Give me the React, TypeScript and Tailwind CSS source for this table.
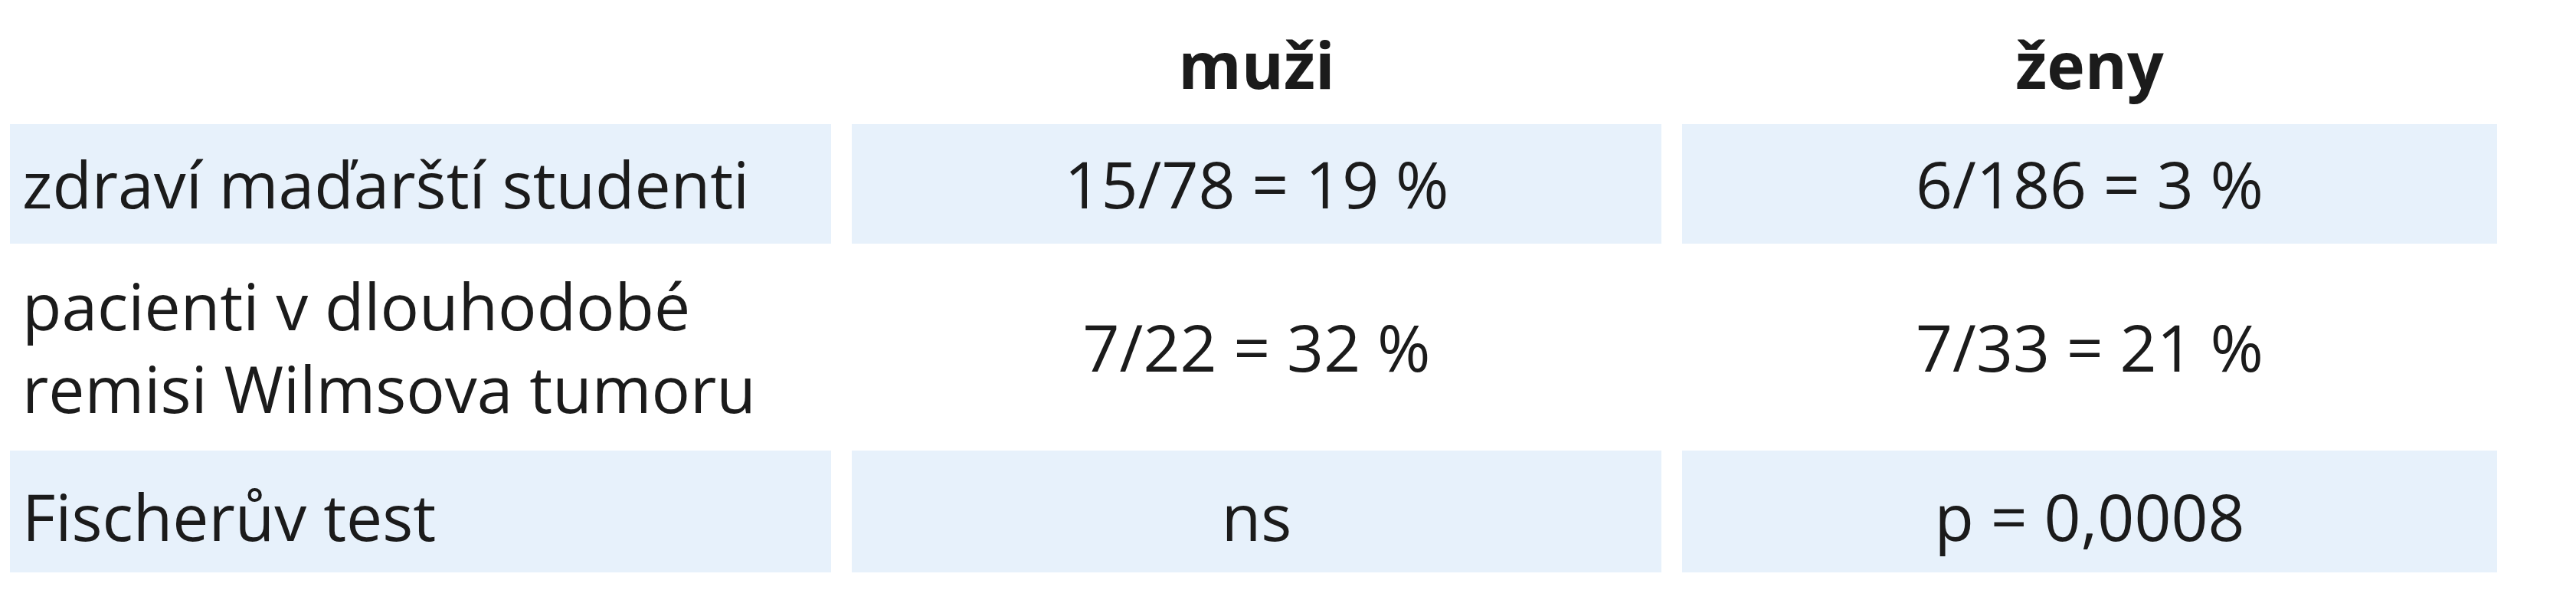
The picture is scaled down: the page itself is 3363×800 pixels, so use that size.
import React from "react";

const bodyFont = { fontFamily: '"Open Sans", "Noto Sans", sans-serif' };

export default function App() {
  return (
    <div
      className="w-[3363px] h-[800px] bg-white text-[#1b1b1b]"
      style={bodyFont}
    >
      <div className="grid grid-cols-[1072px_1057px_1064px] grid-rows-[162px_156px_270px_159px] gap-x-[27px] pl-[13px]">
        {/* header */}
        <div />
        <div className="flex items-center justify-center pt-[6px] text-[84px] font-bold leading-none">
          muži
        </div>
        <div className="flex items-center justify-center pt-[6px] text-[84px] font-bold leading-none">
          ženy
        </div>

        {/* row 1 */}
        <div className="flex items-center bg-[#e7f1fb] pl-[16px] text-[84px] leading-none">
          zdraví maďarští studenti
        </div>
        <div className="flex items-center justify-center bg-[#e7f1fb] text-[84px] leading-none">
          15/78 = 19 %
        </div>
        <div className="flex items-center justify-center bg-[#e7f1fb] text-[84px] leading-none">
          6/186 = 3 %
        </div>

        {/* row 2 */}
        <div className="flex items-center pl-[16px] text-[84px] leading-[108px]">
          <div>
            pacienti v dlouhodobé
            <br />
            remisi Wilmsova tumoru
          </div>
        </div>
        <div className="flex items-center justify-center text-[84px] leading-none">
          7/22 = 32 %
        </div>
        <div className="flex items-center justify-center text-[84px] leading-none">
          7/33 = 21 %
        </div>

        {/* row 3 */}
        <div className="flex items-center bg-[#e7f1fb] pl-[16px] pt-[12px] text-[84px] leading-none">
          Fischerův test
        </div>
        <div className="flex items-center justify-center bg-[#e7f1fb] pt-[12px] text-[84px] leading-none">
          ns
        </div>
        <div className="flex items-center justify-center bg-[#e7f1fb] pt-[12px] text-[84px] leading-none">
          p = 0,0008
        </div>
      </div>
    </div>
  );
}
